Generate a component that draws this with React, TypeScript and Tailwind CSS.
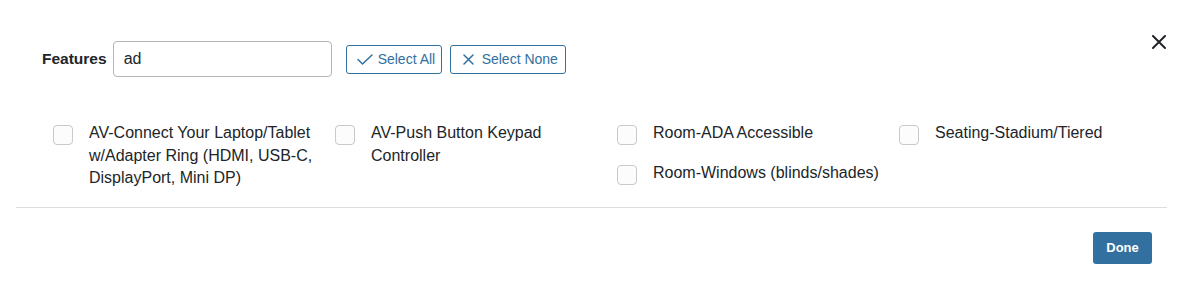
const columns: string[][] = [
  ["AV-Connect Your Laptop/Tablet w/Adapter Ring (HDMI, USB-C, DisplayPort, Mini DP)"],
  ["AV-Push Button Keypad Controller"],
  ["Room-ADA Accessible", "Room-Windows (blinds/shades)"],
  ["Seating-Stadium/Tiered"],
];

function FeatureCheck({ label }: { label: string }) {
  return (
    <label className="flex items-start gap-4">
      <span className="mt-[3px] h-5 w-5 flex-shrink-0 rounded-[4px] border border-[#c9c9c9] bg-[#fcfcfc]" />
      <span className="w-[232px] text-[16px] leading-[22.5px] text-[#212529]">{label}</span>
    </label>
  );
}

export default function App() {
  return (
    <div className="h-[295px] w-full bg-white font-['Liberation_Sans',Arial,sans-serif]">
      {/* Header */}
      <div className="flex items-start justify-between pl-[42px] pr-[10px] pt-[41px]">
        <div className="flex items-center">
          <span className="text-[15.5px] font-bold text-[#212529]">Features</span>
          <input
            defaultValue="ad"
            className="ml-[6px] h-9 w-[219px] rounded-[4px] border border-[#b5b5b5] px-[10px] text-[16px] text-[#212529] outline-none"
          />
          <button className="ml-[14px] flex h-[29px] w-[96px] items-center gap-[5px] rounded-[3px] border border-[#31709f] pl-[10px] text-[14px] text-[#31709f]">
            <svg width="16" height="11" viewBox="0 0 16 11" fill="none" stroke="currentColor" strokeWidth="1.5" strokeLinecap="round" strokeLinejoin="round">
              <path d="M1 5.5 5.5 10 15 1" />
            </svg>
            Select All
          </button>
          <button className="ml-2 flex h-[29px] w-[116px] items-center gap-[8px] rounded-[3px] border border-[#31709f] pl-[12px] text-[14px] text-[#31709f]">
            <svg width="11" height="11" viewBox="0 0 11 11" fill="none" stroke="currentColor" strokeWidth="1.5" strokeLinecap="round">
              <path d="M1 1 10 10M10 1 1 10" />
            </svg>
            Select None
          </button>
        </div>
        <button className="mt-[-13px] flex h-7 w-7 items-center justify-center text-[#212529]">
          <svg width="14" height="14" viewBox="0 0 14 14" fill="none" stroke="currentColor" strokeWidth="2" strokeLinecap="round">
            <path d="M1 1 13 13M13 1 1 13" />
          </svg>
        </button>
      </div>

      {/* Options */}
      <div className="mt-[45px] flex pl-[53px]">
        {columns.map((col, i) => (
          <div key={i} className="flex w-[282px] flex-col gap-[17px]">
            {col.map(label => (
              <FeatureCheck key={label} label={label} />
            ))}
          </div>
        ))}
      </div>

      <div className="mx-[16px] mt-[17px] border-t border-[#dedede]" />

      {/* Footer */}
      <div className="flex justify-end pr-[31px] pt-[24px]">
        <button className="h-8 w-[59px] rounded-[3px] bg-[#31709f] text-[13px] font-bold text-white">Done</button>
      </div>
    </div>
  );
}
